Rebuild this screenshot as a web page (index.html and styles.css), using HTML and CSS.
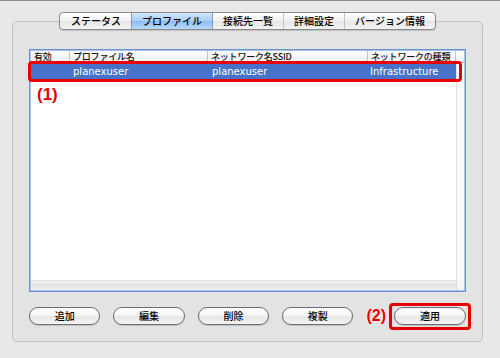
FILE: index.html
```html
<!DOCTYPE html>
<html>
<head>
<meta charset="utf-8">
<link rel="stylesheet" href="styles.css">
</head>
<body>
<div class="window">
  <div class="panel">
    <div class="tabs">
      <div class="tab">ステータス</div>
      <div class="tab sel">プロファイル</div>
      <div class="tab">接続先一覧</div>
      <div class="tab">詳細設定</div>
      <div class="tab">バージョン情報</div>
    </div>
    <div class="list">
      <div class="hdr">
        <div class="c c1">有効</div>
        <div class="c c2">プロファイル名</div>
        <div class="c c3">ネットワーク名SSID</div>
        <div class="c c4">ネットワークの種類</div>
        <div class="c c5"></div>
      </div>
      <div class="body">
        <div class="rows">
          <div class="row sel">
            <div class="c c1"></div>
            <div class="c c2">planexuser</div>
            <div class="c c3">planexuser</div>
            <div class="c c4">Infrastructure</div>
            <div class="mark mark-row"></div>
          </div>
          <div class="note note1">(1)</div>
        </div>
        <div class="vtrack"></div>
      </div>
      <div class="hscroll"><div class="hbar"></div><div class="corner"></div></div>
    </div>
    <div class="buttons">
      <div class="btn">追加</div>
      <div class="btn">編集</div>
      <div class="btn">削除</div>
      <div class="btn">複製</div>
      <div class="apply-group">
        <div class="note note2">(2)</div>
        <div class="btn apply">適用<div class="mark mark-btn"></div></div>
      </div>
    </div>
  </div>
</div>
</body>
</html>
```

FILE: styles.css
```css
* { box-sizing: border-box; }
html, body { margin: 0; padding: 0; }
body {
  width: 500px;
  height: 358px;
  background: #e8e8e8;
  border-top: 1px solid #8c8c8c;
  font-family: "DejaVu Sans", "Noto Sans CJK JP", sans-serif;
  overflow: hidden;
}
.window {
  padding: 20px 17px 0 12px;
}
.panel {
  height: 321px;
  border: 1px solid #c2c2c2;
  border-radius: 5px;
  background: #e3e3e3;
  padding: 0 16px 16px 16px;
  display: flex;
  flex-direction: column;
}
.tabs {
  margin-top: -10px;
  height: 18px;
  display: flex;
  align-self: center;
  border: 1px solid #8a8a8a;
  border-radius: 4px;
  overflow: hidden;
  background: linear-gradient(#ffffff, #f1f1f1 50%, #e6e6e6 51%, #f3f3f3);
  box-shadow: 0 1px 1px rgba(0,0,0,0.15);
}
.tab {
  font-family: "Noto Sans CJK JP", sans-serif;
  font-size: 10px;
  font-weight: 500;
  line-height: 16px;
  padding: 0 10px;
  color: #000;
  border-left: 1px solid #c4c4c4;
}
.tab:first-child { border-left: none; padding-left: 11px; }
.tab.sel {
  background: linear-gradient(#d3e6fb, #a9cdf5 50%, #8cbdf1 51%, #b9daf9);
  border-left: 1px solid #7f9fc8;
  border-right: 1px solid #7f9fc8;
}
.tab.sel + .tab { border-left: none; }
.list {
  margin-top: 19px;
  height: 243px;
  border: 1px solid #6f93d2;
  box-shadow: inset 0 0 0 1px #a8c0ea;
  background: #fff;
  display: flex;
  flex-direction: column;
  padding: 1px;
}
.hdr {
  display: flex;
  height: 12px;
  background: linear-gradient(#ffffff, #eeeeee);
  border-bottom: 1px solid #b8b8b8;
}
.hdr .c {
  font-family: "Noto Sans CJK JP", sans-serif;
  font-size: 9px;
  font-weight: 500;
  line-height: 11px;
  color: #111;
  padding-left: 3px;
  border-right: 1px solid #c2c2c2;
  white-space: nowrap;
  letter-spacing: -0.2px;
}
.c1 { width: 39px; flex: none; }
.c2 { width: 138px; flex: none; }
.c3 { width: 160px; flex: none; }
.c4 { width: 88px; flex: none; }
.c5 { flex: 1; }
.hdr .c5 { border-right: none; }
.body {
  flex: 1;
  display: flex;
}
.rows {
  flex: 1;
  position: relative;
}
.vtrack {
  width: 8px;
  border-left: 1px solid #e2e2e2;
  background: #fbfbfb;
}
.row {
  display: flex;
  height: 17px;
  position: relative;
}
.row.sel { background: #4673c9; }
.row .c {
  font-size: 10px;
  line-height: 17px;
  color: #fff;
  padding-left: 3px;
  white-space: nowrap;
}
.row .c3 { padding-left: 4px; }
.row .c4 { padding-left: 2px; }
.mark {
  position: absolute;
  border: 3px solid #e60000;
  border-radius: 4px;
  pointer-events: none;
}
.mark-row { left: -3px; right: -6px; top: -2px; bottom: -2px; }
.note {
  font-family: "Liberation Sans", Arial, sans-serif;
  font-weight: bold;
  font-size: 17px;
  color: #e60000;
}
.note1 {
  position: absolute;
  left: 6px;
  top: 22px;
}
.hscroll {
  height: 10px;
  display: flex;
}
.hbar {
  flex: 1;
  background: linear-gradient(#f4f4f4, #e4e4e4 40%, #f0f0f0);
  border-top: 1px solid #e0e0e0;
}
.corner {
  width: 8px;
  background: #f6f6f6;
  border-left: 1px solid #dcdcdc;
}
.buttons {
  margin-top: 15px;
  height: 18px;
  display: flex;
  gap: 13px;
}
.btn {
  width: 72px;
  height: 18px;
  border: 1px solid #6e6e6e;
  border-radius: 9px;
  background: linear-gradient(#ffffff, #f4f4f4 50%, #e6e6e6 51%, #f4f4f4);
  box-shadow: 0 1px 1px rgba(0,0,0,0.15);
  font-family: "Noto Sans CJK JP", sans-serif;
  font-size: 10px;
  font-weight: 500;
  line-height: 16px;
  text-align: center;
  color: #000;
  position: relative;
}
.apply-group {
  margin-left: auto;
  display: flex;
  align-items: center;
}
.note2 {
  font-size: 16px;
  margin-right: 8px;
  text-shadow: 0 0 1px #fff, 0 0 1px #fff;
}
.mark-btn { left: -6px; right: -6px; top: -5px; bottom: -6px; }
```
